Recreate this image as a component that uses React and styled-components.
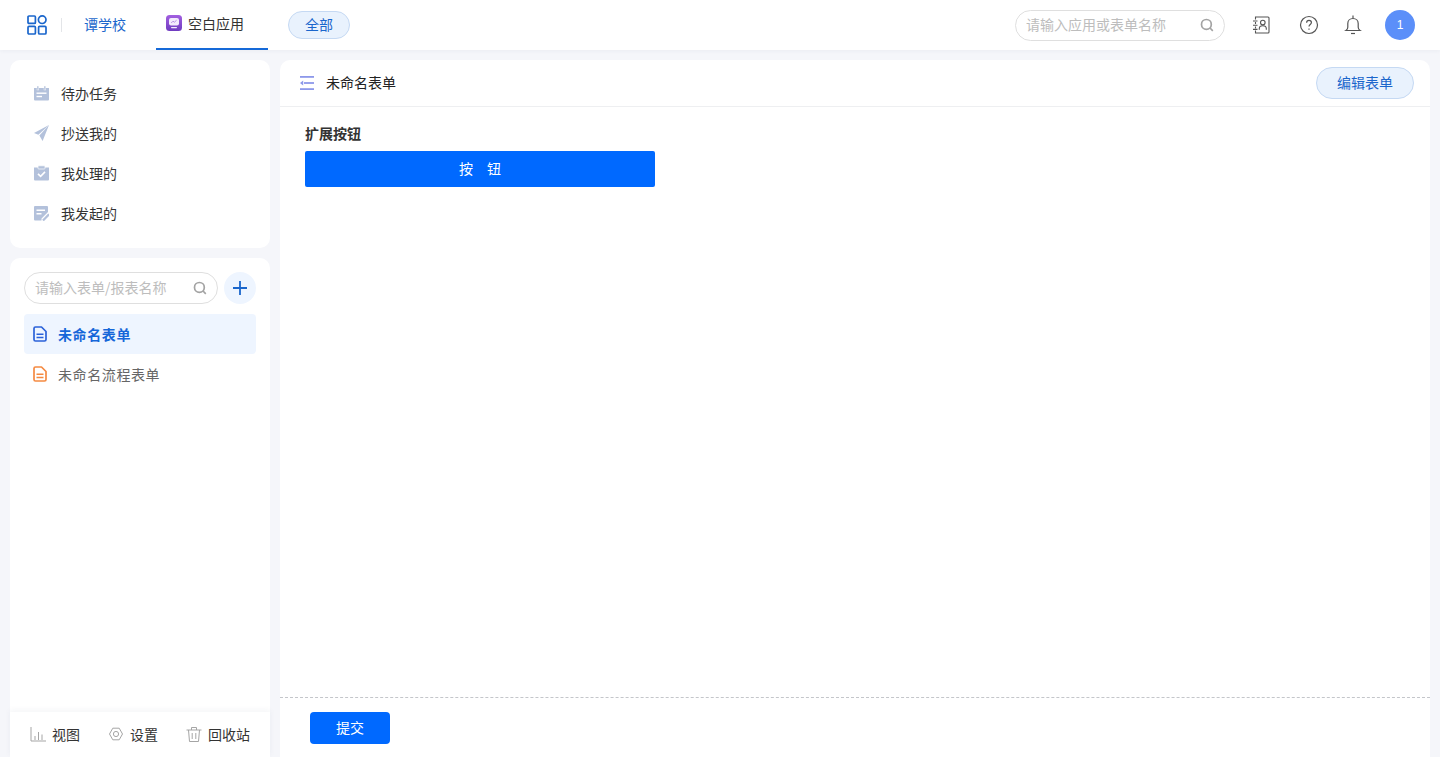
import React from "react";
import styled, { createGlobalStyle } from "styled-components";

const GlobalStyle = createGlobalStyle`
  html, body {
    margin: 0;
    padding: 0;
    height: 100%;
    overflow: hidden;
  }
  body {
    background: #f5f6fa;
    font-family: "Noto Sans CJK SC", "Liberation Sans", sans-serif;
    font-size: 14px;
    color: #333;
  }
  * {
    box-sizing: border-box;
  }
  input::placeholder {
    color: #bdbdbd;
    opacity: 1;
  }
`;

const Page = styled.div`
  width: 1440px;
  height: 757px;
  display: flex;
  flex-direction: column;
`;

const Header = styled.header`
  height: 50px;
  flex: none;
  position: relative;
  background: #fff;
  display: flex;
  align-items: center;
  padding: 0 25px 0 27px;
  box-shadow: 0 1px 4px rgba(30, 50, 90, 0.05);
`;

const Divider = styled.span`
  width: 1px;
  height: 14px;
  background: #e3e5e8;
  margin: 0 22px 0 14px;
`;

const SchoolName = styled.span`
  color: #1a66cc;
  line-height: 20px;
  margin: 0 30px 2px 0;
`;

const Tab = styled.div`
  width: 112px;
  height: 50px;
  display: flex;
  align-items: center;
  gap: 6px;
  padding: 0 0 2px 10px;
  border-bottom: 2px solid #1569d8;
  color: #333;
`;

const Pill = styled.button`
  width: ${(p) => p.$width}px;
  height: ${(p) => p.$height}px;
  margin-left: ${(p) => p.$left || 0}px;
  padding: 0 0 2px;
  flex: none;
  border: 1px solid #c5d9f3;
  border-radius: 16px;
  background: #e9f2fd;
  color: #1a66cc;
  font: inherit;
  font-size: 14px;
`;

const Spacer = styled.div`
  flex: 1;
`;

const SearchBox = styled.label`
  width: ${(p) => p.$width}px;
  height: ${(p) => p.$height}px;
  flex: none;
  display: flex;
  align-items: center;
  padding: 0 10px;
  border: 1px solid #dfdfdf;
  border-radius: 16px;
  background: #fff;
`;

const SearchInput = styled.input`
  flex: 1;
  min-width: 0;
  border: 0;
  outline: 0;
  padding: 0 0 2px;
  font: inherit;
  font-size: 14px;
  background: transparent;
`;

const HeaderIcons = styled.div`
  display: flex;
  align-items: center;
  margin-left: 26px;
`;

const HeaderIcon = styled.span`
  width: 20px;
  height: 20px;
  display: flex;
  margin-right: ${(p) => p.$gap}px;
`;

const Avatar = styled.div`
  width: 30px;
  height: 30px;
  border-radius: 50%;
  background: #5b8ff9;
  color: #fff;
  font-family: "Liberation Sans", sans-serif;
  font-size: 12px;
  display: flex;
  align-items: center;
  justify-content: center;
`;

const Body = styled.div`
  flex: 1;
  min-height: 0;
  display: flex;
  gap: 10px;
  padding: 10px 10px 0;
`;

const Sidebar = styled.aside`
  width: 260px;
  flex: none;
  display: flex;
  flex-direction: column;
  gap: 10px;
`;

const TaskCard = styled.nav`
  height: 188px;
  flex: none;
  background: #fff;
  border-radius: 10px;
  padding: 14px 0 14px 23px;
`;

const TaskRow = styled.div`
  height: 40px;
  display: flex;
  align-items: center;
  gap: 12px;
  padding-bottom: 2px;
  font-size: 14px;
  color: #333;
`;

const FormCard = styled.div`
  flex: 1;
  min-height: 0;
  display: flex;
  flex-direction: column;
  background: #fff;
  border-radius: 10px 10px 0 0;
`;

const FormList = styled.div`
  flex: 1;
  padding: 14px 14px 0;
`;

const SearchRow = styled.div`
  display: flex;
  align-items: center;
  justify-content: space-between;
  margin-bottom: 10px;
`;

const AddButton = styled.div`
  width: 32px;
  height: 32px;
  border-radius: 50%;
  background: #eef5ff;
  display: flex;
  align-items: center;
  justify-content: center;
`;

const FormItem = styled.div`
  height: 40px;
  display: flex;
  align-items: center;
  gap: 11px;
  padding-left: 9px;
  border-radius: 4px;
  letter-spacing: 0.6px;
  background: ${(p) => (p.$active ? "#eef5ff" : "transparent")};
  color: ${(p) => (p.$active ? "#1667d9" : "#666")};
  font-weight: ${(p) => (p.$active ? 700 : 400)};
`;

const SideFooter = styled.div`
  height: 45px;
  flex: none;
  display: flex;
  align-items: center;
  justify-content: space-between;
  padding: 0 20px 2px 20px;
  box-shadow: 0 -2px 6px rgba(30, 50, 90, 0.05);
  color: #333;
`;

const FooterLink = styled.div`
  display: flex;
  align-items: center;
  gap: 6px;
`;

const Main = styled.main`
  flex: 1;
  min-width: 0;
  display: flex;
  flex-direction: column;
  background: #fff;
  border-radius: 10px 10px 0 0;
`;

const MainHead = styled.div`
  height: 47px;
  flex: none;
  display: flex;
  align-items: center;
  gap: 12px;
  padding: 0 16px 0 20px;
  border-bottom: 1px solid #eeeff1;
  color: #222;
`;

const HeadTitle = styled.span`
  margin-bottom: 2px;
`;

const FormBody = styled.div`
  flex: 1;
  padding: 16px 25px;
`;

const FieldLabel = styled.div`
  font-size: 14px;
  font-weight: 700;
  line-height: 20px;
  color: #333;
  margin-bottom: 8px;
`;

const WideButton = styled.button`
  display: block;
  width: 350px;
  height: 36px;
  border: 0;
  padding: 0 0 2px;
  border-radius: 2px;
  background: #0069ff;
  color: #fff;
  font: inherit;
  font-size: 14px;
`;

const MainFoot = styled.div`
  height: 60px;
  flex: none;
  padding: 14px 30px 0;
  border-top: 1px dashed #c4c6ca;
`;

const SubmitButton = styled.button`
  display: block;
  width: 80px;
  height: 32px;
  border: 0;
  padding: 0 0 2px;
  border-radius: 4px;
  background: #0069ff;
  color: #fff;
  font: inherit;
  font-size: 14px;
`;

const AppsIcon = () => (
  <svg width="20" height="20" viewBox="0 0 20 20" fill="none" stroke="#1a66cc" strokeWidth="1.7">
    <rect x="1" y="1" width="7.4" height="7.4" rx="1" />
    <circle cx="15.2" cy="4.7" r="3.8" />
    <rect x="1" y="11.4" width="7.4" height="7.6" rx="1" />
    <rect x="11.6" y="11.4" width="7.4" height="7.6" rx="1" />
  </svg>
);

const AppLogo = () => (
  <svg width="16" height="16" viewBox="0 0 16 16" style={{ flex: "none" }}>
    <defs>
      <linearGradient id="logo" x1="0" y1="0" x2="0" y2="1">
        <stop offset="0" stopColor="#a25fe0" />
        <stop offset="1" stopColor="#6f3bc0" />
      </linearGradient>
    </defs>
    <rect width="16" height="16" rx="3.5" fill="url(#logo)" />
    <rect x="3" y="3" width="10" height="7.5" rx="2" fill="#f3eafc" />
    <path d="M5.2 8l1.8-1.8 1.4 1 2.2-2" fill="none" stroke="#a678dd" strokeWidth=".8" />
    <rect x="5" y="12" width="6" height="1.2" rx=".6" fill="#f3eafc" />
  </svg>
);

const SearchIcon = () => (
  <svg width="14" height="14" viewBox="0 0 14 14" fill="none" stroke="#a3a3a3" strokeWidth="1.7" style={{ flex: "none" }}>
    <circle cx="6.4" cy="6.4" r="4.9" />
    <path d="M10 10l2.8 2.8" />
  </svg>
);

const ContactsIcon = () => (
  <svg width="20" height="20" viewBox="0 0 20 20" fill="none" stroke="#555" strokeWidth="1.1">
    <path d="M4.5 4.500V2h12.500a1 1 0 0 1 1 1v14a1 1 0 0 1-1 1H4.500v-2.500" />
    <path d="M4.500 7v2M4.500 11.500v2" />
    <path d="M2 6h4.500M2 10.200h4.500M2 14.400h4.500" />
    <circle cx="11.800" cy="7.600" r="2.300" />
    <path d="M8.300 14.800v-1.200c0-1.700 1.400-2.800 3.500-2.800s3.500 1.100 3.500 2.800v1.200" />
  </svg>
);

const HelpIcon = () => (
  <svg width="20" height="20" viewBox="0 0 20 20" fill="none" stroke="#555" strokeWidth="1.2">
    <circle cx="10" cy="10" r="8.5" />
    <path d="M7.600 7.800c0-1.500 1.100-2.400 2.400-2.400s2.400.9 2.400 2.200c0 1.900-2.400 2-2.400 4" />
    <path d="M10 13.600v1.200" />
  </svg>
);

const BellIcon = () => (
  <svg width="20" height="20" viewBox="0 0 20 20" fill="none" stroke="#555" strokeWidth="1.2">
    <path d="M10 .5v2.500" />
    <path d="M3 15.500c1.200-.8 1.800-1.800 1.800-3.200V8.500c0-3 2.200-5 5.200-5s5.200 2 5.200 5v3.800c0 1.400.6 2.400 1.800 3.200z" />
    <path d="M8 18.500h4" />
  </svg>
);

const CalendarIcon = () => (
  <svg width="16" height="16" viewBox="0 0 16 16" style={{ flex: "none" }}>
    <path d="M1 3h15v11.500a1 1 0 0 1-1 1H2a1 1 0 0 1-1-1z" fill="#b3c1db" />
    <rect x="4" y="1" width="1.800" height="4" fill="#b3c1db" stroke="#fff" strokeWidth=".4" />
    <rect x="11" y="1" width="1.800" height="4" fill="#b3c1db" stroke="#fff" strokeWidth=".4" />
    <rect x="3.500" y="7.500" width="10" height="1.400" fill="#fff" />
    <rect x="3.500" y="10.800" width="5.500" height="1.400" fill="#fff" />
  </svg>
);

const SendIcon = () => (
  <svg width="16" height="16" viewBox="0 0 16 16" style={{ flex: "none" }}>
    <path d="M16 0L1 8l4.400 1.800z" fill="#b3c1db" />
    <path d="M16 0L6.400 10.400 9.600 16z" fill="#b3c1db" />
  </svg>
);

const ClipboardIcon = () => (
  <svg width="16" height="16" viewBox="0 0 16 16" style={{ flex: "none" }}>
    <path d="M1 2.500h15v12a1 1 0 0 1-1 1H2a1 1 0 0 1-1-1z" fill="#b3c1db" />
    <rect x="5" y=".8" width="7" height="3.200" rx=".8" fill="#b3c1db" stroke="#fff" strokeWidth=".7" />
    <path d="M5 8.800l2.600 2.500 4.400-4.400" fill="none" stroke="#fff" strokeWidth="1.600" />
  </svg>
);

const NoteIcon = () => (
  <svg width="16" height="16" viewBox="0 0 16 16" style={{ flex: "none" }}>
    <path d="M2 1h12a1 1 0 0 1 1 1v5L8.500 13.500v2H2a1 1 0 0 1-1-1V2a1 1 0 0 1 1-1z" fill="#b3c1db" />
    <rect x="3.500" y="4.500" width="8.500" height="1.500" fill="#fff" />
    <rect x="3.500" y="8" width="5" height="1.500" fill="#fff" />
    <path d="M10 15.500l6-6.200" stroke="#b3c1db" strokeWidth="2.200" />
  </svg>
);

const PlusIcon = () => (
  <svg width="16" height="16" viewBox="0 0 16 16" stroke="#1a66cc" strokeWidth="1.8">
    <path d="M8 1v14M1 8h14" />
  </svg>
);

const DocIcon = ({ color }) => (
  <svg width="14" height="16" viewBox="0 0 14 16" fill="none" stroke={color} strokeWidth="1.7" style={{ flex: "none" }}>
    <path d="M2.500 1h6L13 5.500v8a1.500 1.500 0 0 1-1.500 1.500h-9A1.500 1.500 0 0 1 1 13.500v-11A1.500 1.500 0 0 1 2.500 1z" strokeLinejoin="round" />
    <path d="M3.500 8.200h7M3.500 11.400h7" strokeWidth="1.5" />
  </svg>
);

const ChartIcon = () => (
  <svg width="16" height="16" viewBox="0 0 16 16" fill="none" stroke="#a5a5a5" strokeWidth="1">
    <path d="M1 1v14h15" />
    <path d="M5 10v4M8.500 6v8M12 8.500V14" />
  </svg>
);

const GearIcon = () => (
  <svg width="16" height="16" viewBox="0 0 16 16" fill="none" stroke="#a5a5a5" strokeWidth="1">
    <path d="M4.800 2.200h6.400L14.500 8l-3.300 5.800H4.800L1.500 8z" strokeLinejoin="round" />
    <circle cx="8" cy="8" r="2.600" />
  </svg>
);

const TrashIcon = () => (
  <svg width="16" height="16" viewBox="0 0 16 16" fill="none" stroke="#a5a5a5" strokeWidth="1">
    <path d="M.5 4h15M5.500 4V1.500h5V4" />
    <path d="M2.500 4l1 11.500h9l1-11.500" />
    <path d="M6.200 7v6M9.800 7v6" />
  </svg>
);

const OutdentIcon = () => (
  <svg width="14" height="14" viewBox="0 0 14 14" fill="#8d98ea" style={{ flex: "none" }}>
    <rect y="0" width="14" height="1.800" />
    <rect x="4" y="6.100" width="10" height="1.800" />
    <rect y="12.200" width="14" height="1.800" />
    <path d="M0 7l3.200-2.400v4.800z" />
  </svg>
);

const tasks = [
  { label: "待办任务", icon: <CalendarIcon /> },
  { label: "抄送我的", icon: <SendIcon /> },
  { label: "我处理的", icon: <ClipboardIcon /> },
  { label: "我发起的", icon: <NoteIcon /> },
];

export default function App() {
  return (
    <Page>
      <GlobalStyle />
      <Header>
        <AppsIcon />
        <Divider />
        <SchoolName>谭学校</SchoolName>
        <Tab>
          <AppLogo />
          空白应用
        </Tab>
        <Pill $width={62} $height={28} $left={20}>全部</Pill>
        <Spacer />
        <SearchBox $width={210} $height={31}>
          <SearchInput placeholder="请输入应用或表单名称" />
          <SearchIcon />
        </SearchBox>
        <HeaderIcons>
          <HeaderIcon $gap={28}><ContactsIcon /></HeaderIcon>
          <HeaderIcon $gap={24}><HelpIcon /></HeaderIcon>
          <HeaderIcon $gap={22}><BellIcon /></HeaderIcon>
          <Avatar>1</Avatar>
        </HeaderIcons>
      </Header>
      <Body>
        <Sidebar>
          <TaskCard>
            {tasks.map((t) => (
              <TaskRow key={t.label}>
                {t.icon}
                {t.label}
              </TaskRow>
            ))}
          </TaskCard>
          <FormCard>
            <FormList>
              <SearchRow>
                <SearchBox $width={194} $height={32}>
                  <SearchInput placeholder="请输入表单/报表名称" />
                  <SearchIcon />
                </SearchBox>
                <AddButton><PlusIcon /></AddButton>
              </SearchRow>
              <FormItem $active>
                <DocIcon color="#2b62d9" />
                未命名表单
              </FormItem>
              <FormItem>
                <DocIcon color="#f58a42" />
                未命名流程表单
              </FormItem>
            </FormList>
            <SideFooter>
              <FooterLink><ChartIcon />视图</FooterLink>
              <FooterLink><GearIcon />设置</FooterLink>
              <FooterLink><TrashIcon />回收站</FooterLink>
            </SideFooter>
          </FormCard>
        </Sidebar>
        <Main>
          <MainHead>
            <OutdentIcon />
            <HeadTitle>未命名表单</HeadTitle>
            <Spacer />
            <Pill $width={98} $height={32}>编辑表单</Pill>
          </MainHead>
          <FormBody>
            <FieldLabel>扩展按钮</FieldLabel>
            <WideButton>按　钮</WideButton>
          </FormBody>
          <MainFoot>
            <SubmitButton>提交</SubmitButton>
          </MainFoot>
        </Main>
      </Body>
    </Page>
  );
}
